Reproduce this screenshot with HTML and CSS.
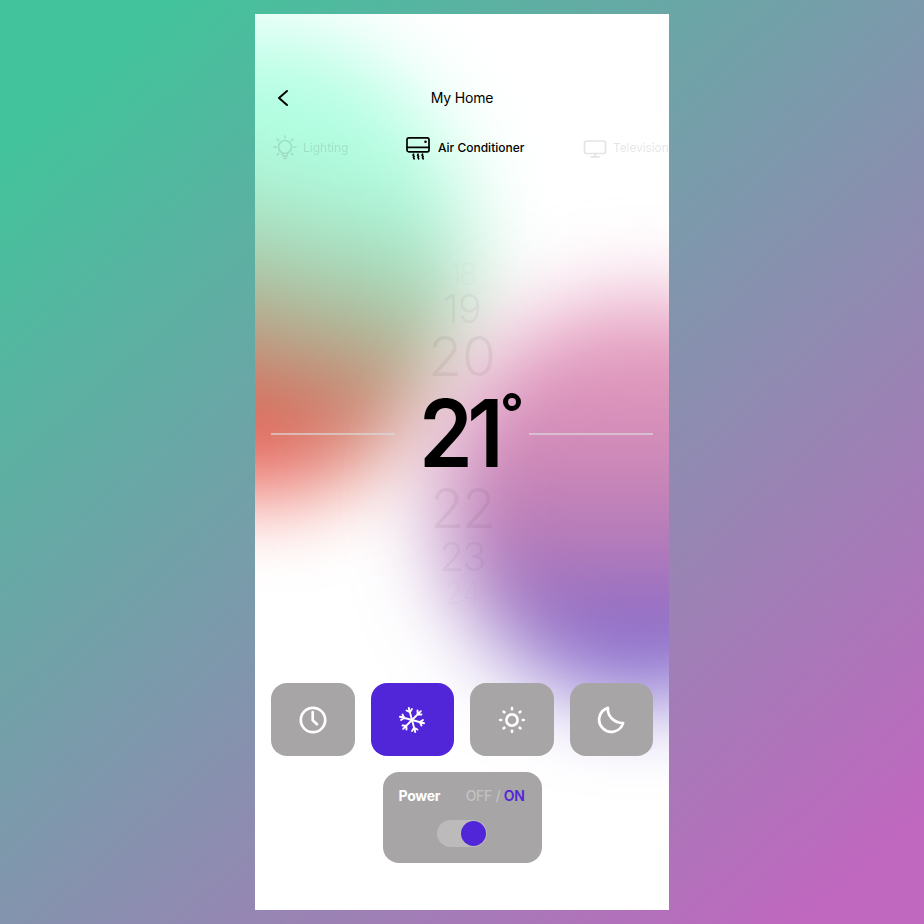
FILE: index.html
```
<!DOCTYPE html>
<html lang="en">
<head>
<meta charset="utf-8">
<title>My Home</title>
<link rel="stylesheet" href="styles.css">
</head>
<body>
<main class="phone">
  <div class="glow glow-left"></div>
  <div class="glow glow-right"></div>
  <header class="header">
    <svg class="back" viewBox="0 0 12 18"><path d="M10 2 2 9l8 7"/></svg>
    <h1>My Home</h1>
  </header>
  <nav class="devices">
    <div class="device lighting">
      <svg width="24" height="26" viewBox="0 0 24 26"><circle cx="12" cy="12" r="6.5"/><path d="M9.3 18.2c.2 1.6.2 2.4 1.2 3.2h3c1-.8 1-1.6 1.2-3.2M10.8 23.5h2.4M12 1v1.8M4.2 4.2l1.4 1.4M19.8 4.2l-1.4 1.4M1 12h2.2M20.8 12H23M4.2 20l1.4-1.4M19.8 20l-1.4-1.4"/></svg>
      <span>Lighting</span>
    </div>
    <div class="device active">
      <svg width="24" height="26" viewBox="0 0 24 26"><rect x="1" y="2.8" width="22" height="14" rx="1.8"/><path d="M1 12.3h22M7.6 19.2l-.5 1.2 1 1-.6 1 .7 1.4M12.1 19.2l-.5 1.2 1 1-.6 1 .7 1.4M16.6 19.2l-.5 1.2 1 1-.6 1 .7 1.4"/><circle class="dot" cx="19.5" cy="6.8" r="1.3"/></svg>
      <span>Air Conditioner</span>
    </div>
    <div class="device television">
      <svg width="24" height="26" viewBox="0 0 24 26"><rect x="1.5" y="6" width="21" height="12.5" rx="2"/><path d="M12 18.5v3M8 21.8h8"/></svg>
      <span>Television</span>
    </div>
  </nav>
  <section class="dial">
    <div class="degree faint n18">18</div>
    <div class="degree faint n19">19</div>
    <div class="degree faint n20">20</div>
    <div class="selected"><i class="rule"></i><div class="current"><span>21</span><svg class="ring" viewBox="0 0 18 18"><circle cx="9" cy="9" r="6.5"/></svg></div><i class="rule"></i></div>
    <div class="degree faint n22">22</div>
    <div class="degree faint n23">23</div>
    <div class="degree faint n24">24</div>
  </section>
  <section class="modes">
    <button class="mode" aria-label="Timer"><svg viewBox="0 0 28 28"><circle cx="14" cy="14" r="12.2"/><path d="M13.7 6v8.2l4.3 4"/></svg></button>
    <button class="mode chosen" aria-label="Cool"><svg viewBox="0 0 28 28"><g transform="rotate(-15 14 14)"><g id="arm"><path d="M14 14V1.5M11.2 3.4 14 6l2.8-2.6"/></g><use href="#arm" transform="rotate(60 14 14)"/><use href="#arm" transform="rotate(120 14 14)"/><use href="#arm" transform="rotate(180 14 14)"/><use href="#arm" transform="rotate(240 14 14)"/><use href="#arm" transform="rotate(300 14 14)"/></g></svg></button>
    <button class="mode" aria-label="Day"><svg viewBox="0 0 28 28"><circle cx="14" cy="14" r="5.6"/><path d="M14 2.2v1M14 24.8v1M2.2 14h1M24.8 14h1M5.6 5.6l.7.7M21.7 21.7l.7.7M5.6 22.4l.7-.7M21.7 6.3l.7-.7"/></svg></button>
    <button class="mode" aria-label="Night"><svg viewBox="0 0 28 28"><path d="M11 1.9A12.2 12.2 0 1 0 26.1 17 15.2 13.6 0 0 1 11 1.9z"/></svg></button>
  </section>
  <section class="power">
    <div class="power-row"><b>Power</b><span class="state">OFF / <em>ON</em></span></div>
    <div class="toggle"><i></i></div>
  </section>
</main>
</body>
</html>
```
FILE: styles.css
```
* { box-sizing: border-box; }
body {
  margin: 0;
  height: 924px;
  display: flex;
  justify-content: center;
  align-items: center;
  background: linear-gradient(138deg, #43c39b 9%, #c067bf 94%);
  font-family: Inter, "Liberation Sans", sans-serif;
  color: #000;
}
.phone {
  position: relative;
  width: 414px;
  height: 896px;
  padding: 70px 16px 0;
  overflow: hidden;
  background: #fff;
  isolation: isolate;
}
.glow { position: absolute; z-index: -1; border-radius: 50%; filter: blur(43px); }
.glow-left {
  left: -205px; top: 16px; width: 420px; height: 464px;
  background: linear-gradient(194deg, #b4ffe6 0%, #b2ffe2 29%, #a8e2c4 43%, #abc4a3 54%, #b8a185 63%, #d67262 75%, #f25048 89%);
}
.glow-right {
  left: 184px; top: 282px; width: 410px; height: 404px;
  background: linear-gradient(#e9a3c2 5%, #d78eb8 32%, #b97db8 58%, #9670c2 78%, #7c65d2 95%);
}
.header { position: relative; height: 28px; display: flex; align-items: center; justify-content: center; }
.header h1 { margin: -1px 0 0; font-size: 14px; font-weight: 400; letter-spacing: -.15px; }
.back { position: absolute; left: 6px; top: 5px; width: 12px; height: 18px; fill: none; stroke: #000; stroke-width: 2; stroke-linecap: round; stroke-linejoin: round; }
.devices { height: 26px; margin: 23px -16px 0 2px; display: flex; align-items: center; white-space: nowrap; }
.device { display: flex; align-items: center; gap: 7px; font-size: 12px; font-weight: 400; opacity: .1; flex: none; }
.device span { margin-top: -2px; }
.device svg { fill: none; stroke: #000; stroke-width: 1.7; stroke-linecap: round; stroke-linejoin: round; }
.device .dot { fill: #000; stroke: none; }
.lighting { width: 133px; gap: 6px; }
.active { width: 177px; gap: 8px; opacity: 1; font-weight: 500; }
.active span { letter-spacing: 0; }
.television { gap: 6px; }
.television span { letter-spacing: -.1px; }
.dial { height: 365px; margin-top: 97px; display: flex; flex-direction: column; align-items: center; }
.faint { color: rgba(65, 45, 60, .07); font-weight: 300; line-height: 1; text-align: center; }
.n18 { height: 31px; font-size: 31px; letter-spacing: -3px; opacity: .3; }
.n19 { height: 40px; font-size: 40px; letter-spacing: -1px; opacity: .8; }
.n20 { height: 57px; font-size: 55px; }
.selected { width: 100%; height: 94px; display: flex; align-items: center; justify-content: space-between; }
.rule { width: 124px; height: 2px; margin-top: 2px; background: rgba(218, 218, 218, .65); }
.current { width: 134px; height: 94px; padding: 0 8px 0 24px; display: flex; align-items: flex-start; justify-content: space-between; font-size: 93px; line-height: 94px; font-weight: 600; letter-spacing: -6px; }
.current span { width: 78px; transform: scaleX(.93); transform-origin: left; }
.ring { width: 18px; height: 18px; margin-top: 7px; flex: none; fill: none; stroke: #000; stroke-width: 5; }
.n22 { height: 57px; padding-top: 1px; font-size: 55px; letter-spacing: -2px; }
.n23 { height: 40px; font-size: 40px; letter-spacing: -2px; opacity: .8; }
.n24 { height: 40px; font-size: 31px; letter-spacing: -1px; opacity: .3; }
.modes { display: grid; grid-template-columns: repeat(4, 1fr); gap: 16px; margin-top: 60px; }
.mode { height: 73px; border: 0; border-radius: 16px; padding: 0; display: flex; align-items: center; justify-content: center; background: #a7a5a6; }
.mode svg { width: 28px; height: 28px; fill: none; stroke: #fff; stroke-width: 2.7; stroke-linecap: round; stroke-linejoin: round; }
.mode.chosen { background: #5126d8; }
.mode.chosen svg { stroke-width: 1.9; }
.power { width: 159px; height: 91px; margin: 16px auto 0; padding: 15px 16px; border-radius: 16px; background: #a7a5a6; }
.power-row { display: flex; justify-content: space-between; font-size: 14px; line-height: 17px; letter-spacing: -.3px; color: #fff; }
.power-row b { font-weight: 650; }
.state { margin-right: 1px; color: #c3c2c3; font-weight: 500; }
.state em { color: #5126d8; font-style: normal; font-weight: 600; }
.toggle { width: 50px; height: 27px; margin: 16px auto 0; padding: 1px; border-radius: 14px; background: #bcbabb; display: flex; justify-content: flex-end; }
.toggle i { width: 25px; height: 25px; border-radius: 50%; background: #5126d8; }
```
